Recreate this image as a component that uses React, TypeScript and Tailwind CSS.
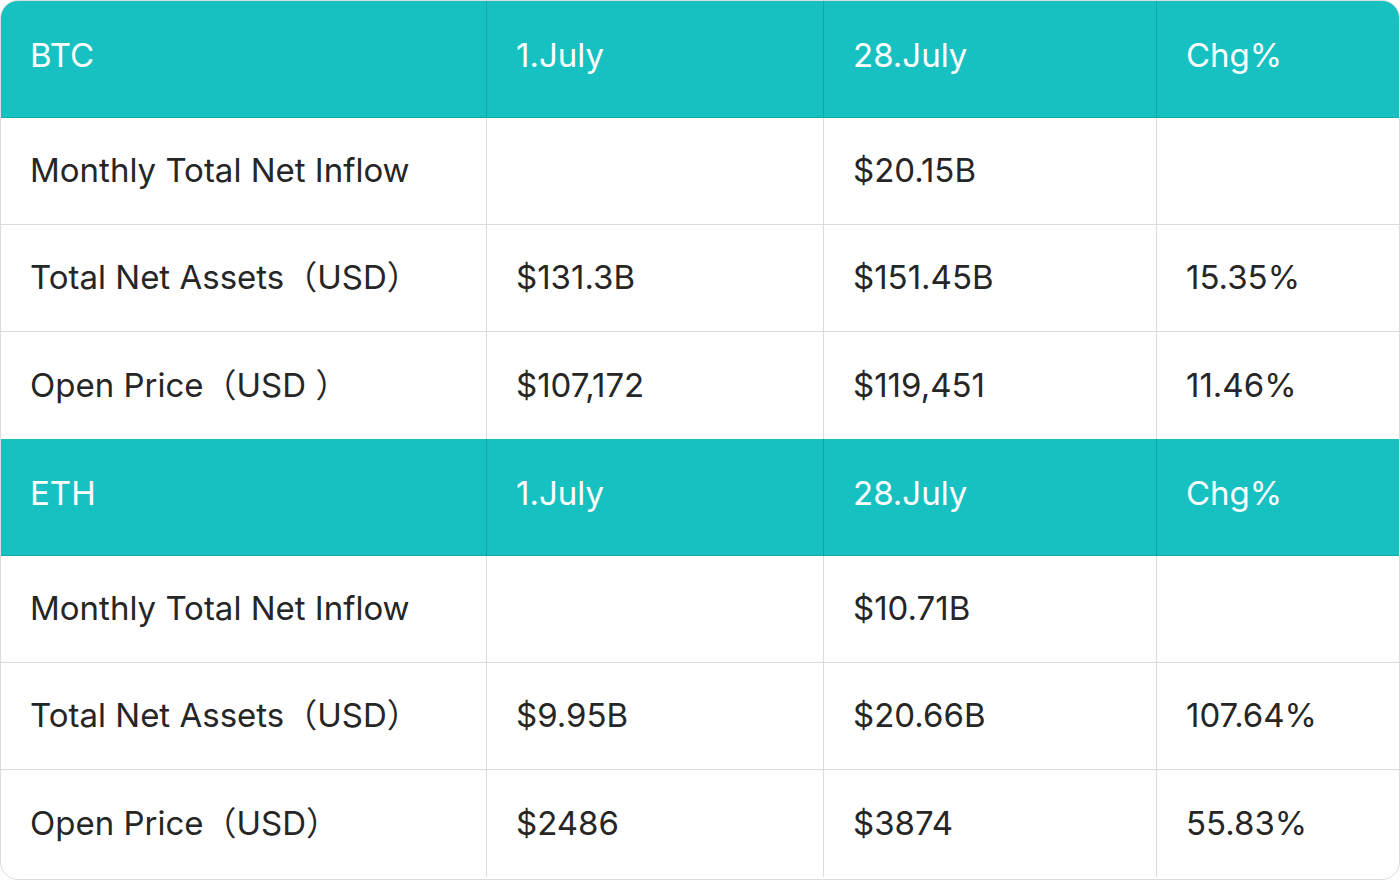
const SECTIONS = [
  {
    asset: 'BTC',
    rows: [
      ['Monthly Total Net Inflow', '', '$20.15B', ''],
      ['Total Net Assets（USD）', '$131.3B', '$151.45B', '15.35%'],
      ['Open Price（USD ）', '$107,172', '$119,451', '11.46%'],
    ],
  },
  {
    asset: 'ETH',
    rows: [
      ['Monthly Total Net Inflow', '', '$10.71B', ''],
      ['Total Net Assets（USD）', '$9.95B', '$20.66B', '107.64%'],
      ['Open Price（USD）', '$2486', '$3874', '55.83%'],
    ],
  },
];

const font = { fontFamily: 'Inter, "Noto Sans CJK SC", sans-serif' };

export default function App() {
  return (
    <div className="w-[1400px] h-[880px] bg-white" style={font}>
      <div className="h-[880px] rounded-[18px] border border-[#dcdcdc] overflow-hidden">
        {SECTIONS.map((section) => (
          <div key={section.asset}>
            <div className="grid grid-cols-[486px_337px_333px_1fr] h-[117px] bg-[#17c1c1] border-b border-[#10a9a9] text-white text-[33px]">
              {[section.asset, '1.July', '28.July', 'Chg%'].map((h, i) => (
                <div key={h} className={`flex items-center px-[29px] pb-[6px] ${i < 3 ? 'border-r border-[#10a9a9]' : ''}`}>
                  {h}
                </div>
              ))}
            </div>
            {section.rows.map((row, r) => (
              <div
                key={r}
                className={`grid grid-cols-[486px_337px_333px_1fr] h-[107px] text-[#262626] text-[33px] ${r < 2 ? 'border-b border-[#dcdcdc]' : ''}`}
              >
                {row.map((cell, i) => (
                  <div key={i} className={`flex items-center px-[29px] ${i < 3 ? 'border-r border-[#dcdcdc]' : ''}`}>
                    {cell}
                  </div>
                ))}
              </div>
            ))}
          </div>
        ))}
      </div>
    </div>
  );
}
